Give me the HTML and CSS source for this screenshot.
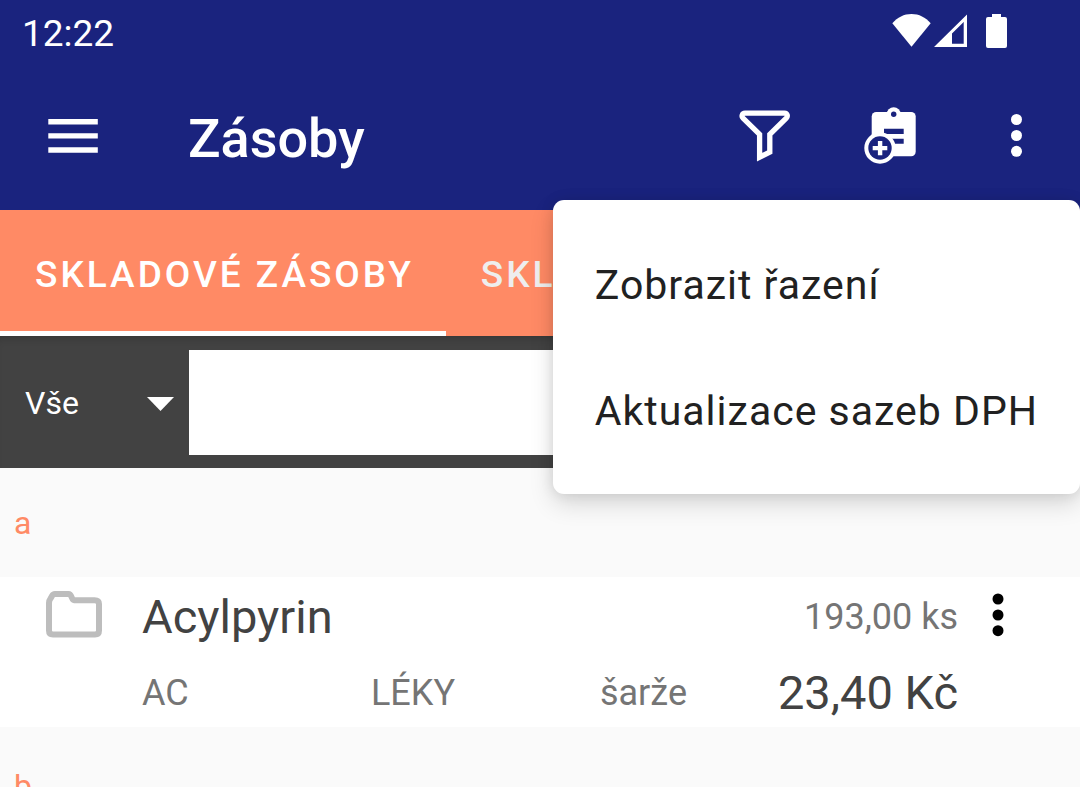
FILE: index.html
```html
<!DOCTYPE html>
<html lang="cs">
<head>
<meta charset="utf-8">
<meta name="viewport" content="width=device-width, initial-scale=1">
<title>Zásoby</title>
<link rel="stylesheet" href="styles.css">
</head>
<body>
<header class="top">
  <div class="status">
    <span class="status-time">12:22</span>
    <svg class="wifi" viewBox="0 0 39 34" aria-hidden="true"><path d="M0.300 9.300C5.500 3.300 12 0 19.500 0s14 3.300 19.200 9.300L19.500 32.700z"/></svg>
    <svg class="signal" viewBox="0 0 33 34" aria-hidden="true"><path fill-rule="evenodd" d="M0 33L33 .5V33zM18 19.500V29.700H29.700V8z"/></svg>
    <svg class="battery" viewBox="0 0 21 34" aria-hidden="true"><path d="M6 0h9v3h4a2 2 0 0 1 2 2v27a2 2 0 0 1-2 2H2a2 2 0 0 1-2-2V5a2 2 0 0 1 2-2h4z"/></svg>
  </div>
  <div class="toolbar">
    <button class="icon-button nav-button" type="button" aria-label="Menu">
      <svg viewBox="0 0 64 64"><path d="M7.300 14h49.500v5.400H7.300zM7.300 28.200h49.500v5.400H7.300zM7.300 42.300h49.500v5.400H7.300z"/></svg>
    </button>
    <h1 class="title">Zásoby</h1>
    <button class="icon-button" type="button" aria-label="Filtr">
      <svg viewBox="0 0 64 64"><path class="outline" d="M12 8.100H51.500C54.500 8.100 55 11.500 53.300 13.200L36.800 29.300V47.200L26.600 52.200V29.300L10 13.200C8.300 11.500 9 8.100 12 8.100z"/></svg>
    </button>
    <button class="icon-button" type="button" aria-label="Přidat">
      <svg viewBox="0 0 64 64">
        <rect x="12.700" y="7" width="44" height="44.300" rx="4.500"/>
        <circle cx="34.700" cy="9.300" r="7"/>
        <g class="cut"><circle cx="34.700" cy="9.300" r="2.700"/><path d="M25 23.700h19.700V29H25zM25 33.700h19.700v5H25z"/></g>
        <circle cx="21" cy="43" r="15.700"/>
        <circle class="cut" cx="21" cy="43" r="11.700"/>
        <path d="M18.900 36h4.400v4.900h5v4.400h-5v4.900h-4.400v-4.900h-5.200v-4.400h5.200z"/>
      </svg>
    </button>
    <button class="icon-button" type="button" aria-label="Další možnosti">
      <svg viewBox="0 0 64 64"><circle cx="31.500" cy="14.500" r="5.500"/><circle cx="31.500" cy="30.500" r="5.500"/><circle cx="31.500" cy="46.300" r="5.500"/></svg>
    </button>
  </div>
  <div class="menu">
    <button class="menu-item" type="button">Zobrazit řazení</button>
    <button class="menu-item" type="button">Aktualizace sazeb DPH</button>
  </div>
</header>
<nav class="tabs">
  <button class="tab tab-active" type="button">SKLADOVÉ ZÁSOBY</button>
  <button class="tab" type="button">SKL</button>
</nav>
<div class="filter">
  <div class="picker">
    <select class="picker-select" aria-label="Kategorie"><option>Vše</option></select>
    <svg class="picker-arrow" viewBox="0 0 27 14" aria-hidden="true"><path d="M0 0h27L13.500 14z"/></svg>
  </div>
  <input class="search" type="text" aria-label="Hledat">
</div>
<main class="list">
  <h2 class="group">a</h2>
  <article class="item">
    <svg class="folder" viewBox="0 0 56 47" aria-hidden="true"><path d="M9 3H22.500C26 3 25.500 9.200 28 9.200H48.500Q53 9.200 53 13V39.500Q53 43.500 49 43.500H7Q3 43.500 3 39.500V12Q3 9.500 4.500 7.500L6 5Q7 3 9 3z"/></svg>
    <div class="item-body">
      <div class="item-line">
        <span class="strong">Acylpyrin</span>
        <span>193,00 ks</span>
      </div>
      <div class="item-details">
        <span>AC</span>
        <span>LÉKY</span>
        <span>šarže</span>
        <span class="strong">23,40 Kč</span>
      </div>
    </div>
    <button class="item-more" type="button" aria-label="Možnosti položky">
      <svg viewBox="0 0 12 44"><circle cx="6" cy="6" r="5.500"/><circle cx="6" cy="22" r="5.500"/><circle cx="6" cy="37.700" r="5.500"/></svg>
    </button>
  </article>
  <h2 class="group">b</h2>
</main>
</body>
</html>
```
FILE: styles.css
```css
* {
  box-sizing: border-box;
}

body {
  margin: 0;
  height: 100vh;
  overflow: hidden;
  background: #fafafa;
  color: #757575;
  font-family: Roboto, "Noto Sans", sans-serif;
  font-size: 37px;
}

button {
  margin: 0;
  padding: 0;
  border: 0;
  background: none;
  color: inherit;
  font: inherit;
}

svg {
  display: block;
  flex: none;
}

.top {
  position: relative;
  background: #1a237e;
  color: #fff;
  fill: #fff;
}

.status {
  display: flex;
  height: 64px;
  padding: 14px 73px 0 22px;
}

.status-time {
  flex: 1;
  line-height: 40px;
}

.wifi {
  width: 39px;
  height: 34px;
  margin-right: 3px;
}

.signal {
  width: 33px;
  height: 34px;
  margin-right: 19px;
}

.battery {
  width: 21px;
  height: 34px;
}

.toolbar {
  display: flex;
  align-items: center;
  height: 146px;
}

.icon-button {
  display: flex;
  flex: none;
  justify-content: center;
  width: 126px;
}

.icon-button svg {
  width: 64px;
  height: 64px;
}

.nav-button {
  width: 146px;
}

.title {
  flex: 1;
  margin: 0 0 0 42px;
  padding-top: 3px;
  font-size: 54px;
  font-weight: 500;
  line-height: 64px;
}

.outline {
  fill: none;
  stroke: #fff;
  stroke-width: 5.300;
}

.cut {
  fill: #1a237e;
}

.menu {
  position: absolute;
  z-index: 2;
  top: 200px;
  right: 0;
  padding: 21px 0;
  border-radius: 11px;
  background: #fff;
  color: #212121;
  box-shadow: 0 10px 24px rgba(0, 0, 0, 0.14), 0 0 14px rgba(0, 0, 0, 0.1);
}

.menu-item {
  display: block;
  width: 100%;
  height: 126px;
  padding: 2px 42px 0;
  font-size: 41px;
  letter-spacing: 1px;
  text-align: left;
  white-space: nowrap;
}

.tabs {
  display: flex;
  height: 126px;
  overflow: hidden;
  background: #ff8a65;
  color: #eee;
}

.tab {
  flex: none;
  padding: 7px 32px 0 35px;
  border-bottom: 5px solid transparent;
  font-weight: 500;
  letter-spacing: 3px;
}

.tab-active {
  border-color: #fff;
  color: #fff;
}

.filter {
  display: flex;
  padding: 14px 0 13px;
  background: #424242;
  box-shadow: inset 0 8px 8px -6px rgba(0, 0, 0, 0.2);
}

.picker {
  display: grid;
  flex: none;
  align-items: center;
  width: 189px;
}

.picker-select,
.picker-arrow {
  grid-area: 1 / 1;
}

.picker-select {
  width: 100%;
  height: 105px;
  padding: 0 25px;
  border: 0;
  background: none;
  color: #fff;
  font: inherit;
  font-size: 32px;
  appearance: none;
}

.picker-arrow {
  justify-self: end;
  width: 27px;
  height: 14px;
  margin: 3px 15px 0 0;
  fill: #fff;
  pointer-events: none;
}

.search {
  flex: 1;
  min-width: 0;
  height: 105px;
  padding: 0 16px;
  border: 0;
  background: #fff;
  font: inherit;
}

.group {
  margin: 0;
  padding: 2px 14px 0;
  color: #ff8a65;
  font-size: 32px;
  font-weight: 400;
  line-height: 107px;
}

.item {
  display: flex;
  align-items: flex-start;
  height: 150px;
  background: #fff;
}

.item + .group {
  padding-top: 6px;
}

.folder {
  width: 56px;
  height: 47px;
  margin: 14px 40px 0 46px;
  fill: none;
  stroke: #bdbdbd;
  stroke-width: 6;
}

.item-body {
  flex: 1;
  padding-top: 2px;
  font-size: 36px;
}

.item-line {
  display: flex;
  justify-content: space-between;
  line-height: 76px;
}

.item-details {
  display: grid;
  grid-template-columns: 229fr 229fr 178fr auto;
  line-height: 76px;
}

.strong {
  color: #424242;
  font-size: 47px;
}

.item-more {
  display: flex;
  flex: none;
  justify-content: center;
  width: 80px;
  margin-right: 42px;
  padding-top: 16px;
}

.item-more svg {
  width: 12px;
  height: 44px;
}
```
